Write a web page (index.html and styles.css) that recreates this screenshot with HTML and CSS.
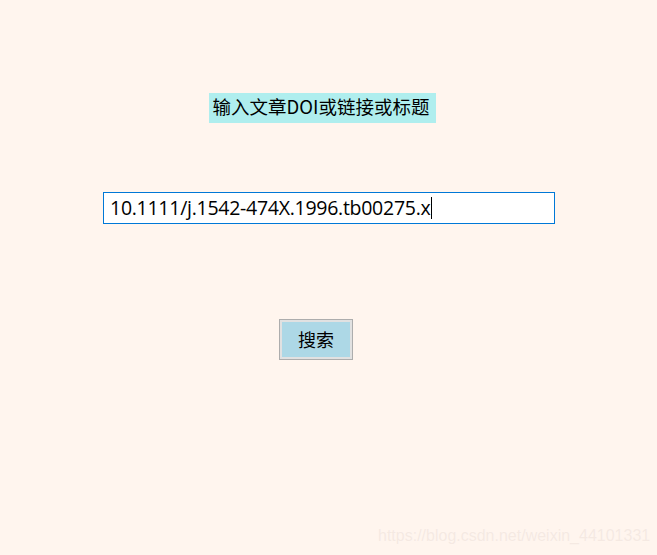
FILE: index.html
```html
<!DOCTYPE html>
<html lang="zh">
<head>
<meta charset="utf-8">
<link rel="stylesheet" href="styles.css">
</head>
<body>
<div class="app">
  <div class="label">输入文章DOI或链接或标题</div>
  <div class="input"><span class="value">10.1111/j.1542-474X.1996.tb00275.x</span><span class="caret"></span></div>
  <button class="btn"><span class="btn-inner">搜索</span></button>
</div>
<div class="watermark">https://blog.csdn.net/weixin_44101331</div>
</body>
</html>
```
FILE: styles.css
```css
html, body {
  margin: 0;
  padding: 0;
  background: #fff5ee;
  width: 657px;
  height: 555px;
  overflow: hidden;
}
body {
  position: relative;
  font-family: "Noto Sans CJK SC", "Noto Sans", sans-serif;
  color: #000;
}
.app {
  display: flex;
  flex-direction: column;
  align-items: flex-start;
  padding-top: 93px;
}
.label {
  margin-left: 209px;
  width: 227px;
  height: 30px;
  background: #afeeee;
  font-size: 18.5px;
  line-height: 26px;
  padding-bottom: 4px;
  padding-right: 3px;
  box-sizing: border-box;
  text-align: center;
  white-space: nowrap;
}
.input {
  margin-top: 69px;
  margin-left: 103px;
  height: 30px;
  border: 1px solid #0078d7;
  background: #fff;
  display: flex;
  align-items: center;
  padding-left: 6px;
  box-sizing: content-box;
  width: 444px;
}
.value {
  font-family: "Open Sans", "Noto Sans", sans-serif;
  font-size: 19.5px;
  letter-spacing: -0.27px;
  line-height: 30px;
  white-space: nowrap;
}
.caret {
  display: inline-block;
  width: 1px;
  height: 22px;
  background: #000;
  margin-left: 1px;
}
.btn {
  margin-top: 95px;
  margin-left: 279px;
  width: 74px;
  height: 41px;
  padding: 0;
  border: 1px solid #adadad;
  background: #e1e1e1;
  display: flex;
  box-sizing: border-box;
}
.btn-inner {
  flex: 1;
  margin: 2px;
  background: #add8e6;
  font-family: "Noto Sans CJK SC", sans-serif;
  font-size: 18px;
  line-height: 35px;
  text-align: center;
  color: #000;
}
.watermark {
  position: absolute;
  left: 378px;
  top: 527px;
  font-family: "Liberation Sans", Arial, sans-serif;
  font-size: 16px;
  color: #f5e9e2;
  text-shadow: 0 0 1px #fffaf6;
  white-space: nowrap;
}
```
